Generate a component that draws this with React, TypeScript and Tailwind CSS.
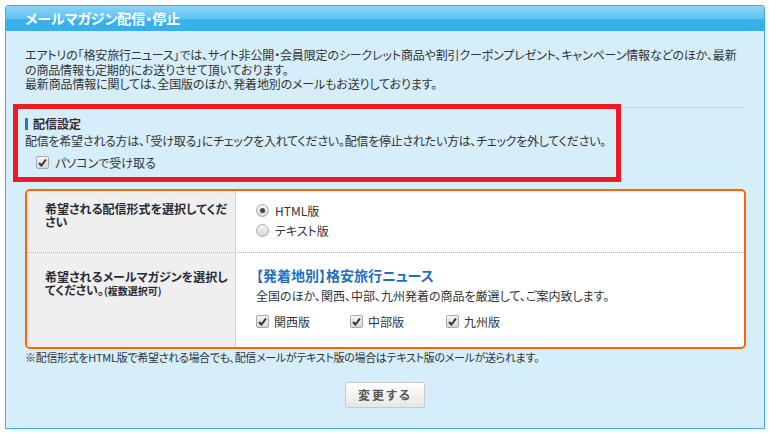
const font = "font-['Noto_Sans_CJK_JP','Noto_Sans',sans-serif] [font-feature-settings:'palt']";

function Check() {
  return (
    <span className="inline-flex h-[13px] w-[13px] items-center justify-center rounded-[2px] border border-[#a9a9a9] bg-gradient-to-b from-[#f4f4f4] to-[#d9d9d9]">
      <svg width="9" height="9" viewBox="0 0 9 9">
        <path d="M1 5 L3.4 7.5 L8 1.5" fill="none" stroke="#333" strokeWidth="2" />
      </svg>
    </span>
  );
}

function Radio({ on }: { on?: boolean }) {
  return (
    <span className="inline-flex h-[13px] w-[13px] items-center justify-center rounded-full border border-[#a9a9a9] bg-gradient-to-b from-[#f6f6f6] to-[#d6d6d6]">
      {on ? <span className="h-[5px] w-[5px] rounded-full bg-[#444]" /> : null}
    </span>
  );
}

export default function App() {
  return (
    <div className={`h-[434px] w-[769px] bg-white pl-[5px] pt-[5px] text-[#333] ${font}`}>
      <div className="flex h-[424px] w-[760px] flex-col overflow-hidden rounded-t-[3px] border border-[#35afea] bg-[#d6edfa]">
        <div className="flex h-[25px] items-center bg-[linear-gradient(to_bottom,#8dd4f6_0%,#5fc2f1_50%,#38b1ec_56%,#36b0ec_100%)] pl-[19px] text-[14px] font-bold text-white">
          メールマガジン配信・停止
        </div>

        <div className="px-[19px] pt-[17px] text-[12px] leading-[16px]">
          <div className="whitespace-nowrap leading-[14.5px] tracking-[-0.15px]">
            <div>エアトリの「格安旅行ニュース」では、サイト非公開・会員限定のシークレット商品や割引クーポンプレゼント、キャンペーン情報などのほか、最新</div>
            <div>の商品情報も定期的にお送りさせて頂いております。</div>
            <div>最新商品情報に関しては、全国版のほか、発着地別のメールもお送りしております。</div>
          </div>

          <div className="relative mt-[15px] w-[720px] border-t border-dotted border-[#b5c9d6] pb-[12px] pt-[8px]">
            <div className="absolute left-[-12px] top-[-4px] h-[78px] w-[608px] border-[5px] border-[#ed1c24]" />
            <div className="flex items-center gap-[5px]">
              <span className="h-[12px] w-[3px] bg-[#2a78be]" />
              <span className="font-bold text-[#3a2c2c]">配信設定</span>
            </div>
            <div className="mt-[1px] whitespace-nowrap tracking-[-0.25px]">
              配信を希望される方は、「受け取る」にチェックを入れてください。配信を停止されたい方は、チェックを外してください。
            </div>
            <label className="ml-[11px] mt-[6px] flex items-center gap-[6px]">
              <Check />
              <span>パソコンで受け取る</span>
            </label>
          </div>

          <div className="mt-[6px] flex w-[721px] flex-col overflow-hidden rounded-[5px] border-2 border-[#ff6600] bg-white">
            <div className="flex h-[62px] border-b border-dotted border-[#7fc2e0]">
              <div className="w-[209px] shrink-0 whitespace-nowrap border-r border-[#b9dcf0] bg-[#efefef] px-[18px] pt-[11px] font-bold leading-[13px] text-[#2b2b35]">
                希望される配信形式を選択してくだ
                <br />
                さい
              </div>
              <div className="flex flex-col gap-[4px] pl-[20px] pt-[12px]">
                <div className="flex items-center gap-[6px]">
                  <Radio on />
                  <span>HTML版</span>
                </div>
                <div className="flex items-center gap-[6px]">
                  <Radio />
                  <span>テキスト版</span>
                </div>
              </div>
            </div>
            <div className="flex h-[94px]">
              <div className="w-[209px] shrink-0 whitespace-nowrap border-r border-[#b9dcf0] bg-[#efefef] px-[18px] pt-[17px] font-bold leading-[13px] text-[#2b2b35]">
                希望されるメールマガジンを選択し
                <br />
                てください。<span className="text-[10px]">(複数選択可)</span>
              </div>
              <div className="pl-[20px] pt-[13px]">
                <div className="text-[14px] font-bold leading-[18px] text-[#1f6fbf]">【発着地別】格安旅行ニュース</div>
                <div className="mt-[4px]">全国のほか、関西、中部、九州発着の商品を厳選して、ご案内致します。</div>
                <div className="mt-[10px] flex items-center">
                  <label className="flex w-[94px] items-center gap-[5px]">
                    <Check />
                    <span>関西版</span>
                  </label>
                  <label className="flex w-[96px] items-center gap-[5px]">
                    <Check />
                    <span>中部版</span>
                  </label>
                  <label className="flex items-center gap-[5px]">
                    <Check />
                    <span>九州版</span>
                  </label>
                </div>
              </div>
            </div>
          </div>

          <p className="mt-[1px] text-[11px] leading-[14px] tracking-[-0.3px]">
            ※配信形式をHTML版で希望される場合でも、配信メールがテキスト版の場合はテキスト版のメールが送られます。
          </p>

          <div className="mt-[18px] flex justify-center">
            <button className="h-[26px] w-[80px] rounded-[2px] border border-[#c9c9c9] bg-gradient-to-b from-white to-[#e6e6e6] text-[12px] font-bold tracking-[2px] text-[#555]">
              変更する
            </button>
          </div>
        </div>
      </div>
    </div>
  );
}
